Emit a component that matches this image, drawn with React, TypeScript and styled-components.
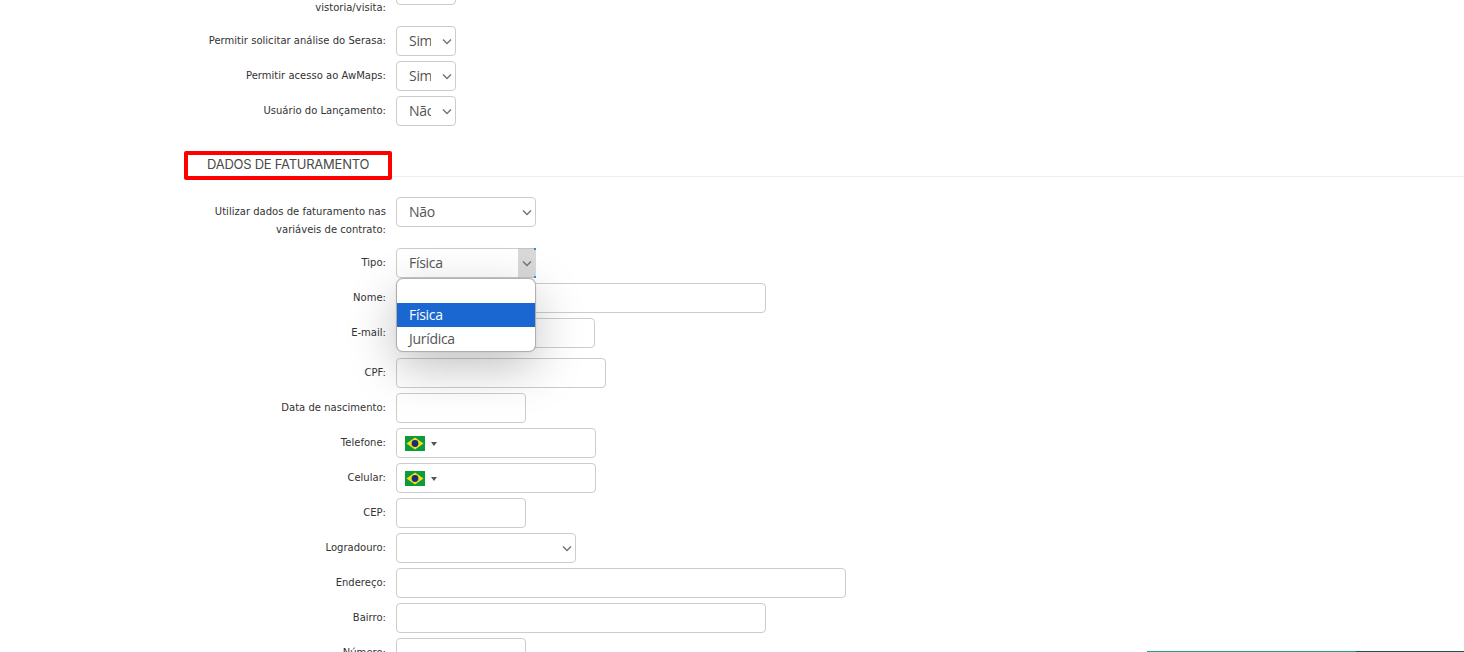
import * as React from 'react'
import styled, { createGlobalStyle } from 'styled-components'

const GlobalStyle = createGlobalStyle`
  html, body {
    margin: 0;
    padding: 0;
    background: #fff;
  }
  body {
    font-family: 'DejaVu Sans', Verdana, sans-serif;
    color: #333;
  }
  * {
    box-sizing: border-box;
  }
`

const Page = styled.div`
  position: relative;
  width: 1464px;
  height: 652px;
  overflow: hidden;
`

const Form = styled.form`
  display: flex;
  flex-direction: column;
  gap: 5px;
  margin-top: -25px;
  padding-left: 207px;
`

const Row = styled.div<{ $spaced?: boolean; $tall?: boolean }>`
  display: flex;
  gap: 10px;
  align-items: flex-start;
  min-height: ${p => (p.$tall ? '46px' : '30px')};
  margin-bottom: ${p => (p.$spaced ? '5px' : '0')};
`

const Label = styled.label`
  flex: 0 0 179px;
  padding-top: 6px;
  font-size: 10px;
  line-height: 18px;
  letter-spacing: 0.02px;
  text-align: right;
  color: #333;
`

const Field = styled.input<{ $width: number }>`
  display: block;
  width: ${p => p.$width}px;
  height: 30px;
  padding: 0 12px;
  border: 1px solid #ccc;
  border-radius: 4px;
  background: transparent;
  outline: none;
`

const SelectWrap = styled.div<{ $width: number }>`
  position: relative;
  width: ${p => p.$width}px;
  height: 30px;
`

const Select = styled.select`
  display: block;
  width: 100%;
  height: 100%;
  padding: 0 24px 2px 12px;
  border: 1px solid #ccc;
  border-radius: 4px;
  appearance: none;
  background: #fff;
  font-family: 'Open Sans', sans-serif;
  font-size: 14px;
  letter-spacing: -0.3px;
  color: #555;
  outline: none;
`

const ArrowHover = styled.span`
  position: absolute;
  top: 0;
  right: 0;
  width: 18px;
  height: 30px;
  background: #d9d9d9;
  border-top: 1px solid #c4c4c4;
  border-bottom: 1px solid #c4c4c4;

  &::before,
  &::after {
    content: '';
    position: absolute;
    right: 0;
    width: 2px;
    height: 2px;
    background: #2a8fd8;
  }
  &::before {
    top: -1px;
  }
  &::after {
    bottom: -1px;
  }
`

const Chevron = styled.svg`
  position: absolute;
  top: 12px;
  right: 4px;
  width: 10px;
  height: 7px;
  fill: none;
  stroke: #777;
  stroke-width: 1.5;
  pointer-events: none;
`

const PhoneWrap = styled.div`
  position: relative;
  width: 200px;
  height: 30px;
`

const FlagButton = styled.span`
  position: absolute;
  top: 8px;
  left: 9px;
  display: flex;
  align-items: center;
  gap: 6px;
`

const Caret = styled.span`
  width: 0;
  height: 0;
  border-left: 3px solid transparent;
  border-right: 3px solid transparent;
  border-top: 4px solid #555;
`

const SectionTitle = styled.h3`
  position: relative;
  margin: 20px 0 15px -23px;
  padding: 3px 0 3px 23px;
  height: 26px;
  border-bottom: 1px solid #eee;
  font-family: Inter, sans-serif;
  font-size: 13px;
  font-weight: 400;
  letter-spacing: -0.25px;
  line-height: 20px;
  color: #4a4a4a;
`

const Highlight = styled.span`
  position: absolute;
  top: 0;
  left: 0;
  width: 208px;
  height: 29px;
  border: 4px solid #f00;
  border-radius: 2px;
  pointer-events: none;
`

const Menu = styled.ul`
  position: absolute;
  top: 279px;
  left: 397px;
  width: 138px;
  margin: 0;
  padding: 0;
  list-style: none;
  overflow: hidden;
  background: #fff;
  border-radius: 6px;
  box-shadow: 0 0 1px 1px #aaa, 0 16px 48px rgba(0, 0, 0, 0.25);
  font-family: 'Open Sans', sans-serif;
  font-size: 14px;
  letter-spacing: -0.3px;
`

const MenuItem = styled.li<{ $selected?: boolean }>`
  height: 24px;
  padding-left: 12px;
  line-height: 24px;
  color: ${p => (p.$selected ? '#fff' : '#555')};
  background: ${p => (p.$selected ? '#1a67d2' : 'transparent')};
`

const BlankItem = styled.li`
  height: 24px;
`

const BottomBar = styled.div`
  position: absolute;
  right: 0;
  bottom: 0;
  display: flex;
  width: 317px;
  height: 1px;
`

const BarSegment = styled.span<{ $dark?: boolean }>`
  flex: ${p => (p.$dark ? '0 0 108px' : '1')};
  background: ${p => (p.$dark ? '#17594f' : '#1fa187')};
`

const ChevronIcon = () => (
  <Chevron viewBox="0 0 10 7">
    <path d="M1 1.5l4 4 4-4" />
  </Chevron>
)

const BrazilFlag = () => (
  <svg width="20" height="15" viewBox="0 0 20 15">
    <rect width="20" height="15" fill="#0a9c3c" />
    <path d="M10 1.5L18.5 7.5 10 13.5 1.5 7.5z" fill="#f7dd1a" />
    <circle cx="10" cy="7.5" r="3.4" fill="#1a2f7a" />
  </svg>
)

const SelectField = ({
  width,
  value,
  hovered,
}: {
  width: number
  value: string
  hovered?: boolean
}) => (
  <SelectWrap $width={width}>
    <Select defaultValue={value}>
      <option value="">{''}</option>
      <option>Sim</option>
      <option>Não</option>
      <option>Física</option>
      <option>Jurídica</option>
    </Select>
    {hovered && <ArrowHover />}
    <ChevronIcon />
  </SelectWrap>
)

const PhoneField = () => (
  <PhoneWrap>
    <Field $width={200} />
    <FlagButton>
      <BrazilFlag />
      <Caret />
    </FlagButton>
  </PhoneWrap>
)

export default function App() {
  return (
    <Page>
      <GlobalStyle />
      <Form>
        <Row $tall={true}>
          <Label>Permitir solicitar agendamento de vistoria/visita:</Label>
          <Field $width={60} />
        </Row>
        <Row>
          <Label>Permitir solicitar análise do Serasa:</Label>
          <SelectField width={60} value="Sim" />
        </Row>
        <Row>
          <Label>Permitir acesso ao AwMaps:</Label>
          <SelectField width={60} value="Sim" />
        </Row>
        <Row>
          <Label>Usuário do Lançamento:</Label>
          <SelectField width={60} value="Não" />
        </Row>

        <SectionTitle>
          DADOS DE FATURAMENTO
          <Highlight />
        </SectionTitle>

        <Row $tall={true}>
          <Label>Utilizar dados de faturamento nas variáveis de contrato:</Label>
          <SelectField width={140} value="Não" />
        </Row>
        <Row>
          <Label>Tipo:</Label>
          <SelectField width={140} value="Física" hovered={true} />
        </Row>
        <Row>
          <Label>Nome:</Label>
          <Field $width={370} />
        </Row>
        <Row $spaced={true}>
          <Label>E-mail:</Label>
          <Field $width={199} />
        </Row>
        <Row>
          <Label>CPF:</Label>
          <Field $width={210} />
        </Row>
        <Row>
          <Label>Data de nascimento:</Label>
          <Field $width={130} />
        </Row>
        <Row>
          <Label>Telefone:</Label>
          <PhoneField />
        </Row>
        <Row>
          <Label>Celular:</Label>
          <PhoneField />
        </Row>
        <Row>
          <Label>CEP:</Label>
          <Field $width={130} />
        </Row>
        <Row>
          <Label>Logradouro:</Label>
          <SelectField width={180} value="" />
        </Row>
        <Row>
          <Label>Endereço:</Label>
          <Field $width={450} />
        </Row>
        <Row>
          <Label>Bairro:</Label>
          <Field $width={370} />
        </Row>
        <Row>
          <Label>Número:</Label>
          <Field $width={130} />
        </Row>
      </Form>

      <Menu>
        <BlankItem />
        <MenuItem $selected={true}>Física</MenuItem>
        <MenuItem>Jurídica</MenuItem>
      </Menu>

      <BottomBar>
        <BarSegment />
        <BarSegment $dark={true} />
      </BottomBar>
    </Page>
  )
}
